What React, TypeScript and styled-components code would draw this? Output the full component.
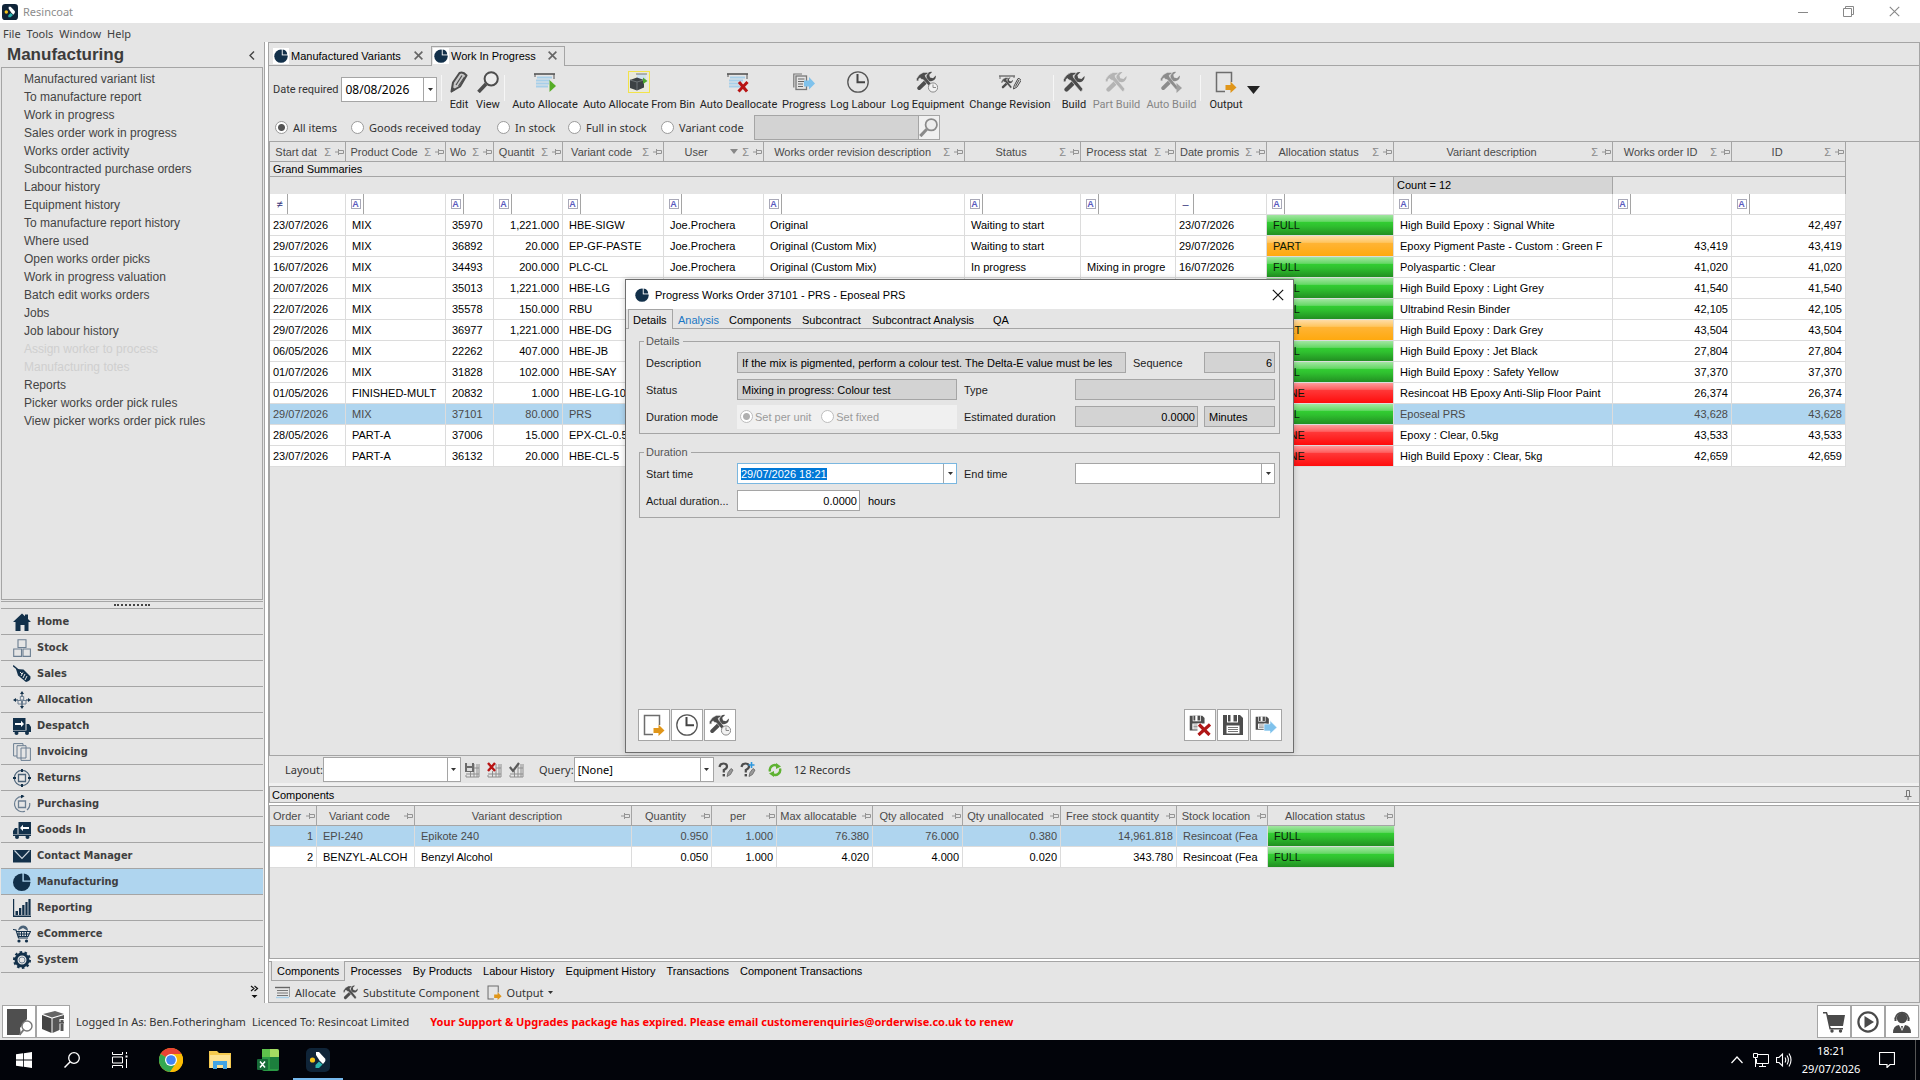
import React, { useEffect, useRef } from "react";
import styled, { createGlobalStyle, css } from "styled-components";

const sans = `"Liberation Sans", Arial, sans-serif`;
const ui = `"Noto Sans", "Open Sans", sans-serif`;
const line = "#a5a5a5";
const face = "#e5e5e5";
const navy = "#12304a";
const iron = "#4d4d4d";
const selection = "#afd5ef";

const GlobalStyle = createGlobalStyle`
  * { box-sizing: border-box; }
  body { margin: 0; background: ${face}; font-family: ${sans}; font-size: 11px; color: #000; }
  button, input, select { font: inherit; color: inherit; border-radius: 0; margin: 0; outline: none; }
  button { background: none; border: 0; padding: 0; cursor: default; }
  svg { display: block; flex: none; }
`;

/* ---------- drawings ---------- */

type IconProps = { size?: number; color?: string };

const Svg = ({ size = 22, box = 22, children }: { size?: number; box?: number; children: React.ReactNode }) => (
  <svg width={size} height={size} viewBox={`0 0 ${box} ${box}`} fill="none" aria-hidden="true">{children}</svg>
);

const hammer = "M0.5 11 L0.5 8.5 Q3 3 8 1.5 L12.5 1.5 L13 3 L10 4.5 L10.5 6.5 L19.5 17.5 Q20 20 17.5 20.5 L8 9.5 L6 9 L4.5 7.5 L3 8.5 L3 10.5Z";
const wrench = "M21.5 5 L18.5 8 L15.2 7.2 L14.4 4.2 L17.5 1 A5.2 5.2 0 0 0 11.6 7.6 L2 17 A2 2 0 0 0 5 20 L14.6 10.8 A5.2 5.2 0 0 0 21.5 5Z";

const ToolsArt = ({ color = iron }: IconProps) => (
  <>
    <path d={wrench} fill={color} />
    <path d={hammer} fill={color} stroke={face} strokeWidth="0.6" />
  </>
);
const ToolsIcon = ({ size, color }: IconProps) => <Svg size={size}><ToolsArt color={color} /></Svg>;
const ToolsClockIcon = ({ size }: IconProps) => (
  <Svg size={size}>
    <g transform="scale(0.92)"><ToolsArt /></g>
    <circle cx="17" cy="16.5" r="4.6" fill="#f2f2f2" stroke="#8a8a8a" strokeWidth="1" />
    <path d="M17 13.5V16.5H20" stroke="#8a8a8a" />
  </Svg>
);
const ToolsPlayIcon = () => (
  <Svg>
    <g transform="scale(0.92)"><ToolsArt color="#8c8c8c" /></g>
    <path d="M16.5 12 L22 17 L16.5 22Z" fill="#a0a0a0" />
  </Svg>
);
const RevisionIcon = () => (
  <Svg>
    <path d="M0 5H16" stroke="#6d6d6d" strokeWidth="1.4" />
    <path d="M1 5V8 M15 5V7" stroke="#6d6d6d" />
    <g transform="translate(2 6) scale(0.55)"><ToolsArt /></g>
    <path d="M15 15 L19 7.5 Q21 7 22 9.5 L18 16 L14.5 18Z" fill="#dadada" stroke={iron} />
    <path d="M16.5 15.5 L20 9" stroke={iron} />
  </Svg>
);
const ClockIcon = () => (
  <Svg>
    <circle cx="11" cy="11" r="10.2" stroke="#555" strokeWidth="1.3" />
    <path d="M10.5 3V11.2H18" stroke="#444" strokeWidth="2" />
  </Svg>
);
const PencilIcon = () => (
  <Svg>
    <path d="M3.5 20.5 L5 11.5 L11.5 2 Q15 .2 18.5 4.5 L12 15.5Z" fill="#c9c9c9" stroke={iron} strokeWidth="2" strokeLinejoin="round" />
    <path d="M8 14 L14 4.5 M10.5 15 L16.5 6" stroke={iron} strokeWidth="1.2" />
    <path d="M3 21.5 L4.5 16 L8 18.5Z" fill={iron} />
  </Svg>
);
const LensIcon = ({ size, color = iron }: IconProps) => (
  <Svg size={size}>
    <circle cx="14.2" cy="7.8" r="6.6" stroke={color} strokeWidth="2" fill="#ececec" />
    <path d="M9 13 L1.5 21" stroke={color} strokeWidth="3.6" />
  </Svg>
);
const ListArt = () => (
  <>
    <path d="M0 3H21" stroke="#555" strokeWidth="1.6" />
    <path d="M1 3V6 M20 3V8" stroke="#555" />
    <path d="M3 6.5H18 M2 9.5H16 M2 12.5H15 M2 15.5H14" stroke="#a7cfe9" strokeWidth="1.8" />
  </>
);
const AllocateIcon = () => <Svg><ListArt /><path d="M15.5 9 L22 15 L15.5 21Z" fill="#56ad27" /></Svg>;
const DeallocateIcon = () => (
  <Svg><ListArt /><path d="M12 11 L20 20.5 M20.5 11 L11.5 20.5" stroke="#b81414" strokeWidth="3" /></Svg>
);
const BinIcon = () => (
  <Svg>
    <rect x=".5" y=".5" width="21" height="21" stroke="#f2e34a" fill="#e9e9dc" />
    <path d="M9 3H18V10H9Z" fill="#cfe2ef" />
    <path d="M8 3H19" stroke="#777" />
    <path d="M2 9 L9 6.5 L16 9 V16.5 L9 19.5 L2 17Z" fill="#3c4144" />
    <path d="M2 9 L9 11 L16 9 M9 11V19" stroke="#6d7376" />
    <path d="M15 6.5 L19.5 10 L15 13Z" fill="#4da62c" />
  </Svg>
);
const ProgressIcon = () => (
  <Svg>
    <path d="M.8 16.5V3H9" stroke="#777" strokeWidth="1.2" />
    <rect x="3" y="5" width="10.5" height="13.5" stroke="#777" strokeWidth="1.3" fill="#e4e4e4" />
    <path d="M5 8H11.5 M5 10.5H11.5 M5 13H10 M5 15.5H10" stroke="#666" />
    <path d="M11 9.5H16V6 L22 12.5 L16 18.5V15.5H11Z" fill="#7fc2ec" />
  </Svg>
);
const OutputIcon = ({ size }: IconProps) => (
  <Svg size={size}>
    <path d="M10 20.5H1.5V1.5H16.5V11" stroke="#6d6d6d" strokeWidth="1.5" />
    <path d="M10.5 14H15.5V10.5 L21.5 16.5 L15.5 22V19H10.5Z" fill="#e0961a" />
  </Svg>
);
const FloppyArt = () => (
  <>
    <path d="M1 1H18 L21 4V21H1Z" fill={iron} />
    <path d="M5 1H16V8.5H5Z" fill="#fff" />
    <path d="M6 1H8.5V7.5H6Z M11.5 1H15V7.5H11.5Z" fill={iron} />
    <path d="M4.5 11.5H17.5V19.5H4.5Z" fill="#fff" />
    <path d="M6 13.5H16 M6 15.5H16 M6 17.5H16" stroke="#777" />
  </>
);
const SaveIcon = () => <Svg><FloppyArt /></Svg>;
const SaveCancelIcon = () => (
  <Svg>
    <g transform="translate(0 1) scale(0.74)"><FloppyArt /></g>
    <path d="M8.5 9.5H22V22H8.5Z" fill="#fff" />
    <path d="M10 10.5 L20.5 21 M21 10.5 L9.5 21" stroke="#b01717" strokeWidth="3.2" />
  </Svg>
);
const SaveNextIcon = () => (
  <Svg>
    <g transform="translate(0 2) scale(0.66)"><FloppyArt /></g>
    <path d="M9 10H15V6.5 L22 13.5 L15 20V17H9Z" fill="#7fc2ec" stroke="#fff" strokeWidth=".6" />
  </Svg>
);
const PieIcon = ({ size = 14 }: IconProps) => (
  <Svg size={size} box={18}>
    <circle cx="9" cy="9.2" r="8.6" fill={navy} />
    <path d="M10 0V8.2H18V0Z" fill="#fff" />
    <path d="M11.2 .8 A7 7 0 0 1 17 7.2 H11.2Z" fill={navy} />
  </Svg>
);
const PinIcon = () => (
  <svg width="9" height="8" viewBox="0 0 9 8" fill="none" stroke="#949494" aria-hidden="true">
    <path d="M0 4H3.5 M3.5 1V7 M3.5 2.5H8.5V5.5H3.5" />
  </svg>
);
const DockPinIcon = () => (
  <svg width="8" height="10" viewBox="0 0 8 10" fill="none" stroke="#777" aria-hidden="true">
    <path d="M2.5 .5H5.5V6 M2.5 .5V6 M.5 6.5H7.5 M4 6.5V10" />
  </svg>
);
const Caret = ({ w = 5, color = "#333" }: { w?: number; color?: string }) => (
  <svg width={w} height={Math.round(w * 0.6)} viewBox="0 0 10 6" preserveAspectRatio="none" aria-hidden="true">
    <path d="M0 0H10L5 6Z" fill={color} />
  </svg>
);
const CrossIcon = ({ size = 8, color = "#666", weight = 1.8 }: IconProps & { weight?: number }) => (
  <svg width={size} height={size} viewBox="0 0 10 10" aria-hidden="true">
    <path d="M.7 .7 L9.3 9.3 M9.3 .7 L.7 9.3" stroke={color} strokeWidth={weight} />
  </svg>
);
const GridArt = () => <path d="M1 13V15H14V2 M9 2V15 M5.5 9V15 M1 12H14 M9 6H14 M12 2V15" stroke="#8e8e8e" />;
const LayoutSaveIcon = () => (
  <Svg size={16} box={16}><GridArt /><path d="M0 1H9V10H0Z" fill="#6a6a6a" /><path d="M2 1H7V4H2Z M2 6H7V9H2Z" fill="#ddd" /></Svg>
);
const LayoutDeleteIcon = () => (
  <Svg size={16} box={16}><GridArt /><path d="M1 1 L8 9 M8 1 L1 9" stroke="#b81414" strokeWidth="2.4" /></Svg>
);
const LayoutApplyIcon = () => (
  <Svg size={16} box={16}><GridArt /><path d="M.8 5 L4 9 L10 1" stroke="#5a5a5a" strokeWidth="2.2" /></Svg>
);
const QueryIcon = ({ plus }: { plus?: boolean }) => (
  <Svg size={16} box={16}>
    <path d="M1.5 5 Q2 1.5 5.5 1.5 Q9 1.5 9 4.5 Q9 6.5 5.8 8 V10.5" stroke={iron} strokeWidth="2.2" />
    <rect x="4.6" y="12" width="2.4" height="2.4" fill={iron} />
    <path d="M9 14.5 L10 10.5 L13 6.5 L15 8 L12.5 12.5Z" fill="#999" stroke="#666" strokeWidth=".8" />
    {plus && <path d="M11.5 0V6 M8.5 3H14.5" stroke="#2e97dd" strokeWidth="1.6" />}
  </Svg>
);
const RefreshIcon = () => (
  <Svg size={14} box={14}>
    <path d="M2 8.5 A5 5 0 0 1 9 2.6 M12 5.5 A5 5 0 0 1 5 11.4" stroke="#5fb232" strokeWidth="2.4" />
    <path d="M8 0 L13 3.5 L8 6Z M6 14 L1 10.5 L6 8Z" fill="#5fb232" />
  </Svg>
);
const SmallListIcon = () => (
  <Svg size={15} box={15}>
    <path d="M0 2.5H15" stroke="#666" strokeWidth="1.4" /><path d="M2 5.5H13 M2 8H13 M2 10.5H13" stroke="#777" /><path d="M1 12.5H14" stroke="#a7cfe9" strokeWidth="1.4" />
    <path d="M14.5 3V12" stroke="#999" />
  </Svg>
);

/* module navigation icons, drawn in an 18 unit box */
const moduleArt: Record<string, React.ReactNode> = {
  Home: <path d="M0 9 L9 .5 L12 3.3V1.5H15V6L18 9H15.5V18H11.5V12H7.5V18H2.5V9Z" fill={navy} />,
  Stock: <path d="M5 .7H13V8.5H5Z M.7 10H8.5V17.4H.7Z M10 10H17.4V17.4H10Z" stroke="#6c7f92" strokeWidth="1.1" />,
  Sales: (
    <>
      <path d="M0 .5 L6 5.5" stroke={navy} strokeWidth="1.4" />
      <path d="M3 4 L10.5 4.5 L17.5 11.5 Q18 16 13 17 L5 10.5Z" fill={navy} />
      <path d="M7 7L9 9 M10 7.5L8 11 M12 9L10 13 M14 11L12 15" stroke="#e8e8e8" />
    </>
  ),
  Allocation: (
    <>
      <path d="M7.3 5.5H10.7V9H7.3Z M5 9.5H8.5V13H5Z M9.5 9.5H13V13H9.5Z" stroke="#6c7f92" />
      <path d="M9 0L11 3H7Z M9 18L7 15H11Z M0 9L3 7V11Z M18 9L15 11V7Z" fill={navy} />
      <path d="M9 2V5 M9 13V16 M2 9H5 M13 9H16" stroke={navy} />
    </>
  ),
  Despatch: (
    <>
      <path d="M0 1H12.5V13H0Z M13.5 7H16L18 10V14H13.5Z M0 13.5H18V15H0Z" fill={navy} />
      <path d="M2 6H8V3.8L11 7L8 10V8H2Z" fill="#fff" />
      <circle cx="3.5" cy="16" r="2" fill={navy} /><circle cx="14" cy="16" r="2" fill={navy} />
    </>
  ),
  Invoicing: (
    <>
      <path d="M.6 .6H10V13H.6Z" stroke="#6c7f92" />
      <path d="M4 2.7H13V15H4Z M8 5H17.4V17.4H8Z" stroke="#6c7f92" fill={face} />
    </>
  ),
  Returns: (
    <>
      <circle cx="9" cy="9" r="7.7" stroke="#4a6278" strokeWidth="1.2" />
      <path d="M5.5 5.5H12.5V12.5H5.5Z" stroke="#4a6278" strokeWidth="1.3" />
      <path d="M9 0V3 M9 15V18 M0 9H3 M15 9H18" stroke={navy} strokeWidth="2" />
    </>
  ),
  Purchasing: (
    <>
      <path d="M9 1.3 A7.7 7.7 0 1 0 12 16.2" stroke="#6c7f92" strokeWidth="1.2" />
      <path d="M16.7 8 A7.7 7.7 0 0 1 14 15" stroke="#6c7f92" strokeWidth="1.2" />
      <path d="M5.5 6H12.5V12.5H5.5Z" stroke="#6c7f92" strokeWidth="1.3" />
      <path d="M8 -1 L11.5 1.3 L8 3.5Z" fill={navy} />
    </>
  ),
  "Goods In": (
    <>
      <path d="M5.5 1H18V13H5.5Z M4.5 7H2L0 10V14H4.5Z M0 13.5H18V15H0Z" fill={navy} />
      <path d="M16 6H10V3.8L7 7L10 10V8H16Z" fill="#fff" />
      <circle cx="4" cy="16" r="2" fill={navy} /><circle cx="14.5" cy="16" r="2" fill={navy} />
    </>
  ),
  "Contact Manager": (
    <>
      <path d="M0 3H18V15.5H0Z" fill={navy} />
      <path d="M1.5 3.5 L9 11.5 L16.5 3.5" stroke="#cfd8e0" strokeWidth="1.1" />
    </>
  ),
  Manufacturing: (
    <>
      <circle cx="8.7" cy="9.3" r="8.7" fill={navy} />
      <path d="M9.4 0V8.7H18V0Z" fill={selection} />
      <path d="M10.8 .6 A7.6 7.6 0 0 1 17.4 7.4 H10.8Z" fill={navy} />
    </>
  ),
  Reporting: <path d="M0 0H1.2V16.5H18V18H0Z M2.5 12H5V16H2.5Z M6 9H8.3V16H6Z M9.2 6H11.5V16H9.2Z M12.4 3H14.6V16H12.4Z M15.4 0H17.6V16H15.4Z" fill={navy} />,
  eCommerce: (
    <>
      <path d="M0 4.5 L3 5 L5.5 13H15 M3.5 6.5H17.5L15 11.5H5" stroke={navy} strokeWidth="1.1" />
      <path d="M6 6V12 M8.5 6V12 M11 6V12 M13.5 6V12 M4 9H16" stroke={navy} />
      <path d="M5 5.5 Q6 .5 10.5 .5 Q15 1 15 6 L10 3Z" fill="#4a6278" />
      <circle cx="6" cy="16" r="1.6" fill={navy} /><circle cx="13.5" cy="16" r="1.6" fill={navy} />
    </>
  ),
  System: (
    <>
      <circle cx="9" cy="9" r="6" stroke={navy} strokeWidth="3" />
      <circle cx="9" cy="9" r="8" stroke={navy} strokeWidth="2" strokeDasharray="2.6 2.4" />
      <circle cx="9" cy="9" r="3" stroke="#6c7f92" />
    </>
  ),
};

/* ---------- shell ---------- */

const Screen = styled.div`
  position: relative;
  display: flex;
  flex-direction: column;
  min-height: 100vh;
`;
const TitleBar = styled.header`
  display: flex;
  align-items: center;
  height: 23px;
  padding: 0 20px 0 2px;
  gap: 5px;
  background: #fff;
  color: #8c8c8c;
  font-family: ${ui};
`;
const Spacer = styled.span`flex: 1;`;
const WindowButtons = styled.div`
  display: flex;
  align-items: center;
  gap: 35px;
`;
const MenuBar = styled.nav`
  display: flex;
  height: 19px;
  align-items: center;
  gap: 6px;
  padding: 2px 3px 0;
  font-family: ${ui};
  color: #404040;
`;
const Main = styled.div`
  flex: 1;
  display: grid;
  grid-template-columns: 264px 5px minmax(0, 1fr);
`;
const Splitter = styled.div`
  background: #fff;
  border-left: 1px solid ${line};
  border-right: 1px solid ${line};
`;

/* ---------- sidebar ---------- */

const Sidebar = styled.aside`
  display: flex;
  flex-direction: column;
  padding: 0 1px;
`;
const SideHead = styled.div`
  display: flex;
  align-items: center;
  justify-content: space-between;
  height: 25px;
  padding: 1px 8px 0 6px;
`;
const SideTitle = styled.h1`
  margin: 0;
  font-size: 17px;
  line-height: 24px;
  color: #3c3c3c;
`;
const SideList = styled.ul`
  flex: 1;
  margin: 0;
  padding: 2px 0 0 22px;
  list-style: none;
  border: 1px solid ${line};
`;
const SideLink = styled.a<{ $off?: boolean }>`
  display: block;
  font-size: 12px;
  line-height: 18px;
  text-decoration: none;
  color: ${(p) => (p.$off ? "#cfcfcf" : "#444")};
`;
const Grip = styled.div`
  display: flex;
  justify-content: center;
  align-items: center;
  height: 7px;
  margin-top: 1px;
  border-top: 1px solid ${line};
  &::after {
    content: "";
    width: 36px;
    border-top: 2px dotted #444;
  }
`;
const Modules = styled.nav`
  border-top: 1px solid ${line};
`;
const ModuleButton = styled.button<{ $on?: boolean }>`
  display: flex;
  align-items: center;
  gap: 6px;
  width: 100%;
  height: 26px;
  padding-left: 12px;
  border-bottom: 1px solid ${line};
  background: ${(p) => (p.$on ? selection : "none")};
  font-family: "DejaVu Sans Condensed", "DejaVu Sans", sans-serif;
  font-weight: bold;
  color: #3f3f3f;
`;
const SideFoot = styled.div`
  display: flex;
  justify-content: flex-end;
  height: 30px;
  padding: 7px 4px 0 0;
`;

/* ---------- workspace ---------- */

const Workspace = styled.main`
  display: flex;
  flex-direction: column;
  min-width: 0;
  border: solid ${line};
  border-width: 1px 1px 1px 0;
`;
const DocTabs = styled.div`
  display: flex;
  align-items: flex-end;
  height: 23px;
  box-shadow: inset 0 -1px ${line};
`;
const DocTab = styled.div<{ $on?: boolean; $w: number }>`
  display: flex;
  align-items: center;
  justify-content: space-between;
  width: ${(p) => p.$w}px;
  height: 20px;
  padding: 0 7px 2px ${(p) => (p.$on ? 1 : 3)}px;
  border: 1px solid ${(p) => (p.$on ? line : "transparent")};
  border-bottom: 0;
  ${(p) => p.$on && css`background: ${face};`}
`;
const DocTabName = styled.button`
  display: flex;
  align-items: center;
  gap: 2px;
`;
const DocIcon = styled.span`
  padding: 1px;
  background: #fff;
`;
const ToolBar = styled.div`
  display: flex;
  align-items: flex-start;
  height: 46px;
  padding: 5px 0 0 4px;
`;
const DateField = styled.div`
  display: flex;
  align-items: center;
  gap: 3px;
  height: 36px;
  font-family: Roboto, sans-serif;
  color: #333;
`;
const ComboBox = styled.span<{ $w: number; $h: number; $hot?: boolean }>`
  display: flex;
  width: ${(p) => p.$w}px;
  height: ${(p) => p.$h}px;
  background: #fff;
  border: 1px solid ${(p) => (p.$hot ? "#7ab7e0" : line)};
`;
const ComboText = styled.input<{ $big?: boolean }>`
  flex: 1;
  min-width: 0;
  border: 0;
  padding: 0 3px;
  background: none;
  color: #000;
  ${(p) => p.$big && css`font-family: ${ui}; font-size: 12px;`}
  &::selection { background: #0078d7; color: #fff; }
`;
const ComboSelect = styled.select`
  flex: 1;
  min-width: 0;
  appearance: none;
  border: 0;
  padding: 0 3px;
  background: none;
  color: #000;
  font-family: ${ui};
`;
const ComboArrow = styled.button`
  display: flex;
  align-items: center;
  justify-content: center;
  width: 13px;
  border-left: 1px solid ${line};
`;
const ToolButton = styled.button<{ $w: number; $off?: boolean }>`
  display: flex;
  flex-direction: column;
  align-items: center;
  width: ${(p) => p.$w}px;
  margin-left: 7px;
  font-family: Roboto, sans-serif;
  line-height: 14px;
  gap: 5px;
  white-space: nowrap;
  color: ${(p) => (p.$off ? "#858585" : "#222")};
  & > span { display: flex; justify-content: center; }
`;
const Divider = styled.span`
  width: 1px;
  height: 26px;
  margin: 4px 0 0 4px;
  background: #f6f6f6;
`;
const MoreButton = styled.button`
  margin: 15px 0 0 4px;
`;
const FilterBar = styled.div`
  display: flex;
  align-items: center;
  height: 29px;
  padding: 1px 0 0 6px;
  font-family: ${ui};
  color: #333;
`;
const Choice = styled.label<{ $w: number }>`
  display: flex;
  align-items: center;
  gap: 5px;
  width: ${(p) => p.$w}px;
  white-space: nowrap;
`;
const Radio = styled.input.attrs({ type: "radio" })`
  appearance: none;
  flex: none;
  width: 13px;
  height: 13px;
  border: 1px solid #9b9b9b;
  border-radius: 50%;
  background: #fff;
  &:checked { background: radial-gradient(#555 0 3px, #fff 4px); }
  &:disabled { border-color: #bdbdbd; }
  &:disabled:checked { background: radial-gradient(#b0b0b0 0 3px, #fff 4px); }
`;
const SearchBox = styled.span`
  display: flex;
  width: 186px;
  height: 25px;
  border: 1px solid ${line};
  background: #d3d3d3;
`;
const SearchInput = styled.input`
  flex: 1;
  min-width: 0;
  border: 0;
  background: none;
`;
const SearchButton = styled.button`
  width: 21px;
  border-left: 1px solid ${line};
  background: #f0f0f0;
`;

/* ---------- tables ---------- */

const GridPane = styled.section<{ $tall?: boolean }>`
  border: solid ${line};
  border-width: 1px 0 1px 1px;
  ${(p) => (p.$tall ? css`flex: 1;` : css`height: 154px;`)}
`;
const Table = styled.table<{ $w: number }>`
  width: ${(p) => p.$w}px;
  table-layout: fixed;
  border-collapse: separate;
  border-spacing: 0;
`;
const HeadCell = styled.th`
  height: 20px;
  padding: 0;
  border-right: 1px solid ${line};
  border-bottom: 1px solid ${line};
  font-weight: normal;
  color: #4a4a4a;
`;
const HeadInner = styled.div`
  display: flex;
  align-items: center;
  gap: 4px;
  height: 19px;
  padding: 0 1px 0 2px;
`;
const HeadText = styled.span`
  flex: 1;
  overflow: hidden;
  white-space: nowrap;
  text-align: center;
`;
const Sigma = styled.span`
  color: #8a8a8a;
`;
const SummaryCell = styled.td<{ $h: number; $fill?: boolean; $edge?: boolean; $rule?: boolean }>`
  height: ${(p) => p.$h}px;
  padding: 0 3px;
  line-height: 13px;
  background: ${(p) => (p.$fill ? "#d5d5d5" : face)};
  ${(p) => p.$edge && css`border-right: 1px solid ${line};`}
  ${(p) => p.$rule && css`border-bottom: 1px solid ${line};`}
`;
const FilterCell = styled.td`
  height: 21px;
  padding: 0;
  background: #fff;
  border-right: 1px solid #dcdcdc;
  border-bottom: 1px solid #dcdcdc;
`;
const FilterInner = styled.div`
  display: flex;
  height: 20px;
`;
const FilterButton = styled.button`
  display: flex;
  align-items: center;
  justify-content: center;
  width: 18px;
  padding-left: 2px;
  border-right: 1px solid ${line};
  color: #34347a;
`;
const LetterBox = styled.span`
  width: 10px;
  height: 10px;
  border: 1px solid #a9a9b8;
  font-size: 9px;
  font-weight: bold;
  line-height: 9px;
  color: #5a5ac0;
`;
const FilterInput = styled.input`
  flex: 1;
  min-width: 0;
  width: 0;
  border: 0;
  padding: 0 2px;
`;
const Cell = styled.td<{ $right?: boolean; $tight?: boolean; $on?: boolean }>`
  height: 21px;
  padding: ${(p) => (p.$tight ? "0 3px" : "0 3px 0 6px")};
  overflow: hidden;
  white-space: nowrap;
  text-align: ${(p) => (p.$right ? "right" : "left")};
  border-right: 1px solid #dcdcdc;
  border-bottom: 1px solid #dcdcdc;
  background: ${(p) => (p.$on ? selection : "#fff")};
  color: ${(p) => (p.$on ? "#4a4a4a" : "#000")};
`;
const fills: Record<string, string> = {
  FULL: "linear-gradient(#a2e6a2, #66d866 32%, #32cd32 36%, #2fc02f 55%, #228f22)",
  PART: "linear-gradient(#ffdca6, #ffc660 32%, #ffb435 36%, #ffa90f)",
  NONE: "linear-gradient(#ff9c9c, #ff6060 32%, #ff3838 36%, #ff0c0c)",
};
const StatusCell = styled(Cell)<{ $status: string }>`
  background: ${(p) => fills[p.$status]};
  color: #0a1a0a;
`;

type Col = { name: string; w: number; right?: boolean; tight?: boolean; filter?: string; sorted?: boolean };

const orderCols: Col[] = [
  { name: "Start dat", w: 76, tight: true, filter: "≠" },
  { name: "Product Code", w: 100 },
  { name: "Wo", w: 48 },
  { name: "Quantit", w: 69, right: true },
  { name: "Variant code", w: 101 },
  { name: "User", w: 100, sorted: true },
  { name: "Works order revision description", w: 201 },
  { name: "Status", w: 116 },
  { name: "Process stat", w: 95 },
  { name: "Date promis", w: 91, tight: true, filter: "–" },
  { name: "Allocation status", w: 127 },
  { name: "Variant description", w: 219 },
  { name: "Works order ID", w: 119, right: true },
  { name: "ID", w: 114, right: true },
];
const orders: string[][] = [
  ["23/07/2026", "MIX", "35970", "1,221.000", "HBE-SIGW", "Joe.Prochera", "Original", "Waiting to start", "", "23/07/2026", "FULL", "High Build Epoxy : Signal White", "", "42,497"],
  ["29/07/2026", "MIX", "36892", "20.000", "EP-GF-PASTE", "Joe.Prochera", "Original (Custom Mix)", "Waiting to start", "", "29/07/2026", "PART", "Epoxy Pigment Paste - Custom : Green F", "43,419", "43,419"],
  ["16/07/2026", "MIX", "34493", "200.000", "PLC-CL", "Joe.Prochera", "Original (Custom Mix)", "In progress", "Mixing in progre", "16/07/2026", "FULL", "Polyaspartic : Clear", "41,020", "41,020"],
  ["20/07/2026", "MIX", "35013", "1,221.000", "HBE-LG", "", "", "", "", "", "FULL", "High Build Epoxy : Light Grey", "41,540", "41,540"],
  ["22/07/2026", "MIX", "35578", "150.000", "RBU", "", "", "", "", "", "FULL", "Ultrabind Resin Binder", "42,105", "42,105"],
  ["29/07/2026", "MIX", "36977", "1,221.000", "HBE-DG", "", "", "", "", "", "PART", "High Build Epoxy : Dark Grey", "43,504", "43,504"],
  ["06/05/2026", "MIX", "22262", "407.000", "HBE-JB", "", "", "", "", "", "FULL", "High Build Epoxy : Jet Black", "27,804", "27,804"],
  ["01/07/2026", "MIX", "31828", "102.000", "HBE-SAY", "", "", "", "", "", "FULL", "High Build Epoxy : Safety Yellow", "37,370", "37,370"],
  ["01/05/2026", "FINISHED-MULT", "20832", "1.000", "HBE-LG-10", "", "", "", "", "", "NONE", "Resincoat HB Epoxy Anti-Slip Floor Paint", "26,374", "26,374"],
  ["29/07/2026", "MIX", "37101", "80.000", "PRS", "", "", "", "", "", "FULL", "Eposeal PRS", "43,628", "43,628"],
  ["28/05/2026", "PART-A", "37006", "15.000", "EPX-CL-0.5", "", "", "", "", "", "NONE", "Epoxy : Clear, 0.5kg", "43,533", "43,533"],
  ["23/07/2026", "PART-A", "36132", "20.000", "HBE-CL-5", "", "", "", "", "", "NONE", "High Build Epoxy : Clear, 5kg", "42,659", "42,659"],
];
const partCols: Col[] = [
  { name: "Order", w: 47, right: true },
  { name: "Variant code", w: 98 },
  { name: "Variant description", w: 217 },
  { name: "Quantity", w: 80, right: true },
  { name: "per", w: 65, right: true },
  { name: "Max allocatable", w: 96, right: true },
  { name: "Qty allocated", w: 90, right: true },
  { name: "Qty unallocated", w: 98, right: true },
  { name: "Free stock quantity", w: 116, right: true },
  { name: "Stock location", w: 91 },
  { name: "Allocation status", w: 127 },
];
const parts: string[][] = [
  ["1", "EPI-240", "Epikote 240", "0.950", "1.000", "76.380", "76.000", "0.380", "14,961.818", "Resincoat (Fea", "FULL"],
  ["2", "BENZYL-ALCOH", "Benzyl Alcohol", "0.050", "1.000", "4.020", "4.000", "0.020", "343.780", "Resincoat (Fea", "FULL"],
];

const total = (cols: Col[]) => cols.reduce((sum, c) => sum + c.w, 0);

const Columns = ({ cols }: { cols: Col[] }) => (
  <colgroup>{cols.map((c) => <col key={c.name} style={{ width: c.w }} />)}</colgroup>
);
const Header = ({ cols, sums }: { cols: Col[]; sums?: boolean }) => (
  <tr>
    {cols.map((c) => (
      <HeadCell key={c.name} scope="col">
        <HeadInner>
          <HeadText>{c.name}</HeadText>
          {c.sorted && <Caret w={8} color="#888" />}
          {sums && <Sigma>Σ</Sigma>}
          <PinIcon />
        </HeadInner>
      </HeadCell>
    ))}
  </tr>
);
const Rows = ({ cols, rows, current }: { cols: Col[]; rows: string[][]; current: number }) => (
  <>
    {rows.map((row, r) => (
      <tr key={r}>
        {row.map((value, c) =>
          cols[c].name === "Allocation status" ? (
            <StatusCell key={c} $status={value}>{value}</StatusCell>
          ) : (
            <Cell key={c} $right={cols[c].right} $tight={cols[c].tight} $on={r === current}>{value}</Cell>
          )
        )}
      </tr>
    ))}
  </>
);

/* ---------- lower panes ---------- */

const LayoutBar = styled.div`
  display: flex;
  align-items: center;
  height: 27px;
  padding-left: 16px;
  font-family: ${ui};
  color: #333;
`;
const BarLabel = styled.label`white-space: nowrap;`;
const IconRow = styled.span<{ $pad: string }>`
  display: flex;
  align-items: center;
  gap: 6px;
  padding: ${(p) => p.$pad};
`;
const PaneCaption = styled.h2`
  display: flex;
  align-items: center;
  justify-content: space-between;
  height: 17px;
  margin: 3px 0 2px;
  padding: 0 7px 0 2px;
  border: 1px solid ${line};
  border-right: 0;
  box-shadow: 0 -3px #f0f0f0, 0 2px #fff;
  font-size: 11px;
  font-weight: normal;
`;
const PaneTabs = styled.div`
  display: flex;
  height: 20px;
  margin-top: 2px;
  padding-left: 2px;
  background: linear-gradient(${line} 1px, transparent 1px);
  box-shadow: 0 -2px #fff;
`;
const PaneTab = styled.button<{ $on?: boolean }>`
  padding: 0 5px;
  margin-right: -1px;
  border: 1px solid transparent;
  border-top: 0;
  white-space: nowrap;
  ${(p) => p.$on && css`border-color: ${line}; background: ${face};`}
`;
const ActionBar = styled.div`
  display: flex;
  align-items: center;
  gap: 7px;
  height: 21px;
  padding: 1px 0 0 6px;
  font-family: ${ui};
  color: #333;
`;
const ActionButton = styled.button`
  display: flex;
  align-items: center;
  gap: 5px;
`;
const StatusBar = styled.footer`
  display: flex;
  align-items: center;
  height: 37px;
  padding: 0 1px 0 2px;
  font-family: ${ui};
  color: #333;
`;
const SquareButton = styled.button<{ $w: number }>`
  display: flex;
  align-items: center;
  justify-content: center;
  width: ${(p) => p.$w}px;
  height: ${(p) => Math.min(p.$w, 33)}px;
  border: 1px solid ${line};
  background: #fff;
`;
const StatusText = styled.span`
  margin-left: 6px;
  white-space: nowrap;
`;
const Warning = styled.strong`
  margin-left: 21px;
  color: #f00;
  white-space: nowrap;
`;

/* ---------- taskbar ---------- */

const TaskBar = styled.footer`
  display: flex;
  align-items: center;
  height: 40px;
  padding-right: 4px;
  background: #02040a;
  color: #fff;
  font-family: ${ui};
`;
const TaskButton = styled.button<{ $w: number; $on?: boolean }>`
  display: flex;
  align-items: center;
  justify-content: center;
  width: ${(p) => p.$w}px;
  height: 40px;
  ${(p) => p.$on && css`box-shadow: inset 0 -2px #76b9ed;`}
`;
const Clock = styled.time`
  width: 72px;
  text-align: center;
  line-height: 18px;
`;
const ShowDesktop = styled.span`
  width: 1px;
  height: 40px;
  margin-left: 8px;
  background: #555;
`;

/* ---------- dialog ---------- */

const Dialog = styled.section`
  position: absolute;
  left: calc(50% - 335px);
  top: 279px;
  display: flex;
  flex-direction: column;
  width: 669px;
  height: 474px;
  border: 1px solid #6e6e6e;
  background: ${face};
  box-shadow: 0 0 6px rgba(0, 0, 0, 0.2);
`;
const DialogTitle = styled.header`
  display: flex;
  align-items: center;
  gap: 6px;
  height: 29px;
  padding: 0 9px;
  background: #fff;
`;
const DialogTabs = styled.div`
  display: flex;
  height: 20px;
  padding-left: 2px;
  box-shadow: inset 0 -1px ${line};
`;
const DialogTab = styled.button<{ $on?: boolean; $w: number; $hint?: boolean }>`
  width: ${(p) => p.$w}px;
  text-align: left;
  padding-left: 4px;
  border: 1px solid transparent;
  border-bottom: 0;
  white-space: nowrap;
  ${(p) => p.$on && css`border-color: ${line}; background: ${face};`}
  ${(p) => p.$hint && css`color: #1c78c4;`}
`;
const DialogBody = styled.div`
  flex: 1;
  padding: 6px 13px 0;
`;
const Group = styled.fieldset`
  margin: 0 0 12px;
  padding: 0 4px 6px 6px;
  border: 1px solid ${line};
`;
const Legend = styled.legend`
  margin-left: -2px;
  padding: 0 3px 0 2px;
  line-height: 13px;
  color: #555;
`;
const FieldRow = styled.div`
  display: flex;
  align-items: center;
  height: 21px;
  margin-top: 6px;
  &:first-of-type { margin-top: 4px; }
`;
const FieldLabel = styled.label<{ $w: number; $gap?: boolean }>`
  width: ${(p) => p.$w}px;
  margin-left: ${(p) => (p.$gap ? 7 : 0)}px;
  white-space: nowrap;
  color: #1c1c1c;
`;
const Field = styled.input<{ $w: number; $right?: boolean; $open?: boolean }>`
  width: ${(p) => p.$w}px;
  height: 21px;
  padding: 0 ${(p) => (p.$right ? 2 : 4)}px 0 4px;
  border: 1px solid ${line};
  background: ${(p) => (p.$open ? "#fff" : "#d3d3d3")};
  text-align: ${(p) => (p.$right ? "right" : "left")};
  & + & { margin-left: 6px; }
`;
const ModeBox = styled.div`
  display: flex;
  align-items: center;
  width: 220px;
  height: 24px;
  padding-left: 3px;
  gap: 10px;
  background: #f0f0f0;
  color: #9b9b9b;
`;
const Mode = styled.label`
  display: flex;
  align-items: center;
  gap: 2px;
`;
const Unit = styled.span`margin-left: 8px;`;
const DialogActions = styled.footer`
  display: flex;
  justify-content: space-between;
  padding: 0 11px 11px 12px;
`;
const ActionGroup = styled.div`
  display: flex;
  gap: 1px;
`;

/* ---------- data ---------- */

const menu = ["File", "Tools", "Window", "Help"];
const sideLinks = [
  "Manufactured variant list", "To manufacture report", "Work in progress", "Sales order work in progress",
  "Works order activity", "Subcontracted purchase orders", "Labour history", "Equipment history",
  "To manufacture report history", "Where used", "Open works order picks", "Work in progress valuation",
  "Batch edit works orders", "Jobs", "Job labour history", "Assign worker to process", "Manufacturing totes",
  "Reports", "Picker works order pick rules", "View picker works order pick rules",
];
const disabledLinks = ["Assign worker to process", "Manufacturing totes"];
type Tool = { name: string; w: number; icon: React.ReactNode; off?: boolean; split?: boolean };
const tools: Tool[] = [
  { name: "Edit", w: 19, icon: <PencilIcon /> },
  { name: "View", w: 25, icon: <LensIcon />, split: true },
  { name: "Auto Allocate", w: 65, icon: <AllocateIcon /> },
  { name: "Auto Allocate From Bin", w: 109, icon: <BinIcon /> },
  { name: "Auto Deallocate", w: 76, icon: <DeallocateIcon /> },
  { name: "Progress", w: 41, icon: <ProgressIcon /> },
  { name: "Log Labour", w: 53, icon: <ClockIcon /> },
  { name: "Log Equipment", w: 72, icon: <ToolsClockIcon /> },
  { name: "Change Revision", w: 79, icon: <RevisionIcon />, split: true },
  { name: "Build", w: 25, icon: <ToolsIcon /> },
  { name: "Part Build", w: 46, icon: <ToolsIcon color="#b4b4b4" />, off: true },
  { name: "Auto Build", w: 50, icon: <ToolsPlayIcon />, off: true, split: true },
  { name: "Output", w: 35, icon: <OutputIcon /> },
];
const choices: [string, number][] = [["All items", 76], ["Goods received today", 146], ["In stock", 71], ["Full in stock", 93], ["Variant code", 93]];
const dialogTabs: [string, number][] = [["Details", 45], ["Analysis", 51], ["Components", 73], ["Subcontract", 70], ["Subcontract Analysis", 121], ["QA", 30]];
const paneTabs = ["Components", "Processes", "By Products", "Labour History", "Equipment History", "Transactions", "Component Transactions"];

const AppLogo = ({ size = 16 }: IconProps) => (
  <Svg size={size} box={24}>
    <rect width="24" height="24" rx="5" fill="#0f2438" />
    <circle cx="6.5" cy="12" r="2.6" fill="#f5c518" />
    <path d="M10 4H13L19 10.5Q20 12 19 13.5L17 16L13.5 12.5L10 7Z" fill="#fff" />
    <path d="M13 13.5L16.5 16.5L13 20H9.5V17Z" fill="#2bb5ae" />
  </Svg>
);

const ProgressDialog = () => {
  const start = useRef<HTMLInputElement>(null);
  useEffect(() => {
    start.current?.focus();
    start.current?.select();
  }, []);
  return (
    <Dialog role="dialog" aria-label="Progress Works Order">
      <DialogTitle>
        <PieIcon />
        Progress Works Order 37101 - PRS - Eposeal PRS
        <Spacer />
        <button aria-label="Close dialog"><CrossIcon size={12} color="#111" weight={1} /></button>
      </DialogTitle>
      <DialogTabs>
        {dialogTabs.map(([name, w], i) => (
          <DialogTab key={name} $w={w} $on={i === 0} $hint={i === 1}>{name}</DialogTab>
        ))}
      </DialogTabs>
      <DialogBody>
        <Group>
          <Legend>Details</Legend>
          <FieldRow>
            <FieldLabel $w={91} htmlFor="description">Description</FieldLabel>
            <Field id="description" $w={389} readOnly value="If the mix is pigmented, perform a colour test. The Delta-E value must be les" />
            <FieldLabel $w={71} $gap htmlFor="sequence">Sequence</FieldLabel>
            <Field id="sequence" $w={71} $right readOnly value="6" />
          </FieldRow>
          <FieldRow>
            <FieldLabel $w={91} htmlFor="status">Status</FieldLabel>
            <Field id="status" $w={220} readOnly value="Mixing in progress: Colour test" />
            <FieldLabel $w={111} $gap htmlFor="type">Type</FieldLabel>
            <Field id="type" $w={200} readOnly value="" />
          </FieldRow>
          <FieldRow>
            <FieldLabel as="span" $w={91}>Duration mode</FieldLabel>
            <ModeBox>
              <Mode><Radio name="mode" disabled defaultChecked />Set per unit</Mode>
              <Mode><Radio name="mode" disabled />Set fixed</Mode>
            </ModeBox>
            <FieldLabel $w={111} $gap htmlFor="estimate">Estimated duration</FieldLabel>
            <Field id="estimate" $w={123} $right readOnly value="0.0000" />
            <Field aria-label="Duration unit" $w={71} readOnly value="Minutes" />
          </FieldRow>
        </Group>
        <Group>
          <Legend>Duration</Legend>
          <FieldRow>
            <FieldLabel $w={91} htmlFor="start">Start time</FieldLabel>
            <ComboBox $w={220} $h={21} $hot>
              <ComboText id="start" ref={start} defaultValue="29/07/2026 18:21" />
              <ComboArrow aria-label="Pick start time"><Caret /></ComboArrow>
            </ComboBox>
            <FieldLabel $w={111} $gap htmlFor="end">End time</FieldLabel>
            <ComboBox $w={200} $h={21}>
              <ComboText id="end" />
              <ComboArrow aria-label="Pick end time"><Caret /></ComboArrow>
            </ComboBox>
          </FieldRow>
          <FieldRow>
            <FieldLabel $w={91} htmlFor="actual">Actual duration...</FieldLabel>
            <Field id="actual" $w={123} $right $open defaultValue="0.0000" />
            <Unit>hours</Unit>
          </FieldRow>
        </Group>
      </DialogBody>
      <DialogActions>
        <ActionGroup>
          <SquareButton $w={32} aria-label="Output"><OutputIcon /></SquareButton>
          <SquareButton $w={32} aria-label="Log labour"><ClockIcon /></SquareButton>
          <SquareButton $w={32} aria-label="Log equipment"><ToolsClockIcon /></SquareButton>
        </ActionGroup>
        <ActionGroup>
          <SquareButton $w={32} aria-label="Discard"><SaveCancelIcon /></SquareButton>
          <SquareButton $w={32} aria-label="Save"><SaveIcon /></SquareButton>
          <SquareButton $w={32} aria-label="Save and continue"><SaveNextIcon /></SquareButton>
        </ActionGroup>
      </DialogActions>
    </Dialog>
  );
};

export default function App() {
  return (
    <Screen>
      <GlobalStyle />
      <TitleBar>
        <AppLogo />
        Resincoat
        <Spacer />
        <WindowButtons>
          <button aria-label="Minimise"><svg width="10" height="10" viewBox="0 0 10 10"><path d="M0 5.5H10" stroke="#888" /></svg></button>
          <button aria-label="Restore"><svg width="11" height="11" viewBox="0 0 11 11" fill="none" stroke="#888"><path d="M.5 2.5H8.5V10.5H.5Z M2.5 2.5V.5H10.5V8.5H8.5" /></svg></button>
          <button aria-label="Close"><CrossIcon size={11} color="#888" weight={1} /></button>
        </WindowButtons>
      </TitleBar>
      <MenuBar>{menu.map((m) => <button key={m}>{m}</button>)}</MenuBar>

      <Main>
        <Sidebar>
          <SideHead>
            <SideTitle>Manufacturing</SideTitle>
            <button aria-label="Collapse"><svg width="6" height="9" viewBox="0 0 6 9" fill="none"><path d="M5 .5 L1 4.5 L5 8.5" stroke="#444" strokeWidth="1.4" /></svg></button>
          </SideHead>
          <SideList>
            {sideLinks.map((s) => (
              <li key={s}><SideLink href="#" $off={disabledLinks.includes(s)}>{s}</SideLink></li>
            ))}
          </SideList>
          <Grip />
          <Modules>
            {Object.keys(moduleArt).map((m) => (
              <ModuleButton key={m} $on={m === "Manufacturing"}>
                <Svg size={18} box={18}>{moduleArt[m]}</Svg>
                {m}
              </ModuleButton>
            ))}
          </Modules>
          <SideFoot>
            <button aria-label="More modules">
              <svg width="9" height="14" viewBox="0 0 9 14" fill="none"><path d="M1 1L4 3.5L1 6 M4.5 1L7.5 3.5L4.5 6" stroke="#111" strokeWidth="1.2" /><path d="M1.5 10H7.5L4.5 13Z" fill="#111" /></svg>
            </button>
          </SideFoot>
        </Sidebar>
        <Splitter />
        <Workspace>
          <DocTabs>
            <DocTab $w={162}>
              <DocTabName><DocIcon><PieIcon /></DocIcon>Manufactured Variants</DocTabName>
              <button aria-label="Close Manufactured Variants"><CrossIcon size={9} /></button>
            </DocTab>
            <DocTab $w={134} $on>
              <DocTabName><DocIcon><PieIcon /></DocIcon>Work In Progress</DocTabName>
              <button aria-label="Close Work In Progress"><CrossIcon size={9} /></button>
            </DocTab>
          </DocTabs>
          <ToolBar>
            <DateField>
              <label htmlFor="required">Date required</label>
              <ComboBox $w={96} $h={25}>
                <ComboText id="required" $big defaultValue="08/08/2026" />
                <ComboArrow aria-label="Pick date"><Caret /></ComboArrow>
              </ComboBox>
            </DateField>
            <Divider />
            {tools.map((t) => (
              <React.Fragment key={t.name}>
                <ToolButton $w={t.w} $off={t.off}><span>{t.icon}</span><span>{t.name}</span></ToolButton>
                {t.split && <Divider />}
              </React.Fragment>
            ))}
            <MoreButton aria-label="More output options"><Caret w={13} color="#222" /></MoreButton>
          </ToolBar>
          <FilterBar>
            {choices.map(([name, w], i) => (
              <Choice key={name} $w={w}><Radio name="filter" defaultChecked={i === 0} />{name}</Choice>
            ))}
            <SearchBox>
              <SearchInput aria-label="Variant code search" />
              <SearchButton aria-label="Search"><LensIcon size={19} color="#8a8a8a" /></SearchButton>
            </SearchBox>
          </FilterBar>

          <GridPane $tall>
            <Table $w={total(orderCols)}>
              <Columns cols={orderCols} />
              <thead><Header cols={orderCols} sums /></thead>
              <tbody>
                <tr><SummaryCell $h={15} $edge $rule colSpan={14}>Grand Summaries</SummaryCell></tr>
                <tr>
                  <SummaryCell $h={17} $edge colSpan={11} />
                  <SummaryCell $h={17} $fill $edge>Count = 12</SummaryCell>
                  <SummaryCell $h={17} $edge colSpan={2} />
                </tr>
                <tr>
                  {orderCols.map((c) => (
                    <FilterCell key={c.name}>
                      <FilterInner>
                        <FilterButton aria-label={`Filter type for ${c.name}`}>{c.filter ?? <LetterBox>A</LetterBox>}</FilterButton>
                        <FilterInput aria-label={`Filter ${c.name}`} />
                      </FilterInner>
                    </FilterCell>
                  ))}
                </tr>
                <Rows cols={orderCols} rows={orders} current={9} />
              </tbody>
            </Table>
          </GridPane>

          <LayoutBar>
            <BarLabel htmlFor="layout">Layout:</BarLabel>
            <ComboBox $w={138} $h={25}>
              <ComboSelect id="layout"><option></option></ComboSelect>
              <ComboArrow as="span"><Caret /></ComboArrow>
            </ComboBox>
            <IconRow $pad="0 4px">
              <button aria-label="Save layout"><LayoutSaveIcon /></button>
              <button aria-label="Delete layout"><LayoutDeleteIcon /></button>
              <button aria-label="Apply layout"><LayoutApplyIcon /></button>
            </IconRow>
            <IconRow $pad="0 0 0 10px">
              <BarLabel htmlFor="query">Query:</BarLabel>
            </IconRow>
            <ComboBox $w={140} $h={25}>
              <ComboSelect id="query"><option>[None]</option></ComboSelect>
              <ComboArrow as="span"><Caret /></ComboArrow>
            </ComboBox>
            <IconRow $pad="0 12px 0 4px">
              <button aria-label="Edit query"><QueryIcon /></button>
              <button aria-label="New query"><QueryIcon plus /></button>
            </IconRow>
            <IconRow $pad="0 12px 0 0">
              <button aria-label="Refresh"><RefreshIcon /></button>
            </IconRow>
            12 Records
          </LayoutBar>

          <PaneCaption>Components<DockPinIcon /></PaneCaption>
          <GridPane>
            <Table $w={total(partCols)}>
              <Columns cols={partCols} />
              <thead><Header cols={partCols} /></thead>
              <tbody><Rows cols={partCols} rows={parts} current={0} /></tbody>
            </Table>
          </GridPane>
          <PaneTabs>{paneTabs.map((t, i) => <PaneTab key={t} $on={i === 0}>{t}</PaneTab>)}</PaneTabs>
          <ActionBar>
            <ActionButton><SmallListIcon />Allocate</ActionButton>
            <ActionButton><ToolsIcon size={15} />Substitute Component</ActionButton>
            <ActionButton><OutputIcon size={15} />Output<Caret /></ActionButton>
          </ActionBar>
        </Workspace>
      </Main>

      <StatusBar>
        <SquareButton $w={34} aria-label="Find document">
          <Svg size={28} box={28}>
            <path d="M2 1H22V11L15 20L16 27H2Z" fill="#4f4f4f" />
            <circle cx="22" cy="18" r="5" stroke="#777" strokeWidth="1.4" fill="#fff" /><path d="M18.5 22L14.5 27" stroke="#777" strokeWidth="2" />
          </Svg>
        </SquareButton>
        <SquareButton $w={34} aria-label="Product information">
          <Svg size={26} box={26}>
            <path d="M3 5L15 2L24 5L12 8.5Z" fill="#666" /><path d="M2 6L11.5 9.5V24L2 20Z" fill="#444" /><path d="M12.5 9.5L24 6V19L12.5 24Z" fill="#565656" />
            <path d="M22 10V13 M22 14.5V23" stroke="#fff" strokeWidth="5" /><path d="M22 11V13 M22 14.5V22" stroke="#555" strokeWidth="3" />
          </Svg>
        </SquareButton>
        <StatusText>Logged In As: Ben.Fotheringham</StatusText>
        <StatusText>Licenced To: Resincoat Limited</StatusText>
        <Warning>Your Support &amp; Upgrades package has expired. Please email customerenquiries@orderwise.co.uk to renew</Warning>
        <Spacer />
        <SquareButton $w={34} aria-label="Shop">
          <Svg size={22}><path d="M0 1H4L5 4H22L20 15H7L8 17H20V18.5H6.5L3 2.5H0Z" fill="#4a4a4a" /><circle cx="9" cy="20" r="1.7" fill="#4a4a4a" /><circle cx="17.5" cy="20" r="1.7" fill="#4a4a4a" /></Svg>
        </SquareButton>
        <SquareButton $w={34} aria-label="Play video">
          <Svg size={22}><circle cx="11" cy="11" r="9.6" stroke="#4a4a4a" strokeWidth="2.2" /><path d="M7.5 5L17 11L7.5 17Z" fill="#4a4a4a" /></Svg>
        </SquareButton>
        <SquareButton $w={34} aria-label="Support">
          <Svg size={22}>
            <circle cx="11" cy="7" r="5.2" fill="#4a4a4a" /><path d="M4.5 8A6.5 6.5 0 0 1 17.5 8" stroke="#4a4a4a" strokeWidth="1.6" /><path d="M3.5 6.5H5.5V10H3.5Z M16.5 6.5H18.5V10H16.5Z" fill="#4a4a4a" />
            <path d="M2 22Q2 14.5 8 14L11 20L14 14Q20 14.5 20 22Z" fill="#4a4a4a" /><path d="M10 15H12L11 19Z" fill="#4a4a4a" />
          </Svg>
        </SquareButton>
      </StatusBar>

      <TaskBar>
        <TaskButton $w={48} aria-label="Start"><Svg size={16} box={16}><path d="M0 2.3L7 1.3V7.6H0Z M7.8 1.2L16 0V7.6H7.8Z M0 8.4H7V14.7L0 13.7Z M7.8 8.4H16V16L7.8 14.8Z" fill="#fff" /></Svg></TaskButton>
        <TaskButton $w={48} aria-label="Search"><Svg size={16} box={16}><circle cx="10" cy="6" r="5.3" stroke="#fff" strokeWidth="1.3" /><path d="M6.2 9.8L.5 15.5" stroke="#fff" strokeWidth="1.5" /></Svg></TaskButton>
        <TaskButton $w={48} aria-label="Task view"><Svg size={16} box={16}><path d="M.5 0V2.5H10.5V0 M.5 5H10.5V11H.5Z M.5 16V13.5H10.5V16 M14.5 0V2 M14.5 7V16" stroke="#fff" /><path d="M13.5 3.5H15.5V5.5H13.5Z" fill="#fff" /></Svg></TaskButton>
        <TaskButton $w={53} aria-label="Chrome">
          <Svg size={24} box={24}>
            <circle cx="12" cy="12" r="12" fill="#fbbc05" />
            <path d="M12 12L1.6 6A12 12 0 0 1 22.4 6H12Z" fill="#ea4335" />
            <path d="M12 12L1.6 6A12 12 0 0 0 11 24L17.2 15Z" fill="#34a853" />
            <path d="M12 6H22.4A12 12 0 0 1 11 24L17.2 15Z" fill="#fbbc05" />
            <circle cx="12" cy="12" r="6" fill="#fff" /><circle cx="12" cy="12" r="4.8" fill="#4285f4" />
          </Svg>
        </TaskButton>
        <TaskButton $w={46} aria-label="File Explorer">
          <Svg size={22}><path d="M0 2H8L10 4H22V19H0Z" fill="#f4c94f" /><path d="M1 6H21V19H1Z" fill="#fde293" /><path d="M4 20V12H18V20H14V16H8V20Z" fill="#42a5e6" /></Svg>
        </TaskButton>
        <TaskButton $w={50} aria-label="Excel">
          <Svg size={22}><rect x="5" width="17" height="22" rx="2" fill="#2a9a45" /><path d="M5 0H13V8H5Z" fill="#5fc24c" /><path d="M13 0H20Q22 0 22 2V8H13Z" fill="#a5dc62" /><path d="M13 8H22V20H13Z" fill="#1c7f3d" /><rect y="10" width="11" height="11" rx="1" fill="#176a38" /><path d="M3 12.5L8 18.5 M8 12.5L3 18.5" stroke="#fff" strokeWidth="1.5" /></Svg>
        </TaskButton>
        <TaskButton $w={50} $on aria-label="OrderWise"><AppLogo size={24} /></TaskButton>
        <Spacer />
        <TaskButton $w={24} aria-label="Show hidden icons"><svg width="12" height="8" viewBox="0 0 12 8" fill="none"><path d="M.5 7L6 1L11.5 7" stroke="#fff" strokeWidth="1.2" /></svg></TaskButton>
        <TaskButton $w={24} aria-label="Network"><Svg size={16} box={16}><path d="M5 2.5H15.5V11.5H3.5V7 M9.5 11.5V14 M6 14.5H13 M.5 1.5H4.5V5.5H.5Z M2.5 5.5V15" stroke="#fff" /></Svg></TaskButton>
        <TaskButton $w={22} aria-label="Volume"><Svg size={16} box={16}><path d="M.5 5.5H3L6.5 2V14L3 10.5H.5Z M9 5.5Q10.5 8 9 10.5 M11 3.5Q13.8 8 11 12.5 M13 1.5Q17 8 13 14.5" stroke="#fff" strokeWidth="1.1" /></Svg></TaskButton>
        <Clock>18:21<br />29/07/2026</Clock>
        <TaskButton $w={40} aria-label="Notifications"><Svg size={16} box={16}><path d="M.5 .5H15.5V12.5H11L8 15.5V12.5H.5Z" stroke="#fff" strokeWidth="1.2" /></Svg></TaskButton>
        <ShowDesktop />
      </TaskBar>
      <ProgressDialog />
    </Screen>
  );
}
